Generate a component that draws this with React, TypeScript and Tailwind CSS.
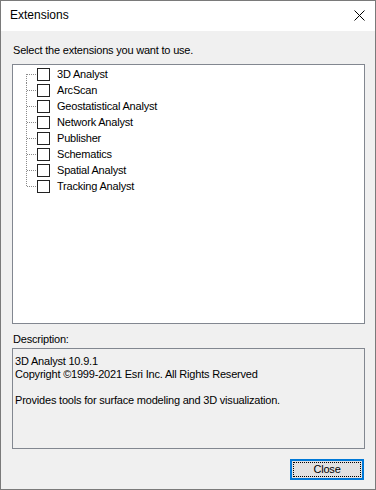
const extensions = [
  "3D Analyst",
  "ArcScan",
  "Geostatistical Analyst",
  "Network Analyst",
  "Publisher",
  "Schematics",
  "Spatial Analyst",
  "Tracking Analyst",
];

function TreeLines({ first, last }: { first: boolean; last: boolean }) {
  return (
    <svg width="24" height="16" viewBox="0 0 24 16" className="shrink-0">
      <line
        x1="13.5"
        y1={first ? 7 : 0}
        x2="13.5"
        y2={last ? 8 : 16}
        stroke="#8a8a8a"
        strokeWidth="1"
        strokeDasharray="1 1"
      />
      <line x1="14" y1="7.5" x2="24" y2="7.5" stroke="#8a8a8a" strokeWidth="1" strokeDasharray="1 1" />
    </svg>
  );
}

export default function App() {
  return (
    <div
      className="w-[376px] h-[490px] border border-[#7a7a7a] bg-[#f0f0f0] flex flex-col text-black text-[11px] leading-[13px] tracking-[-0.2px]"
      style={{ fontFamily: '"Liberation Sans", Arial, sans-serif' }}
    >
      {/* Title bar */}
      <div className="h-[30px] bg-white flex items-center justify-between shrink-0">
        <span className="pl-[9px] text-[12px] tracking-normal pb-[1px]">Extensions</span>
        <svg width="11" height="11" viewBox="0 0 11 11" className="mr-[10px] mb-[1px]">
          <path d="M0.5 0.5 L10.5 10.5 M10.5 0.5 L0.5 10.5" stroke="#000" strokeWidth="1" />
        </svg>
      </div>

      <div className="flex flex-col pl-[11px]">
        <p className="mt-[13px] pl-[1px]">Select the extensions you want to use.</p>

        {/* Extension list */}
        <div className="mt-[7px] w-[353px] h-[260px] border border-[#828790] bg-white pt-[2px]">
          {extensions.map((name, i) => (
            <div key={name} className="flex items-start h-[16px]">
              <TreeLines first={i === 0} last={i === extensions.length - 1} />
              <span className="mt-[1px] w-[13px] h-[13px] border border-[#222] bg-white shrink-0" />
              <span className="ml-[7px] mt-[1px]">{name}</span>
            </div>
          ))}
        </div>

        <p className="mt-[9px] pl-[1px]">Description:</p>

        <div className="mt-[2px] w-[353px] h-[101px] border border-[#828790] bg-[#f0f0f0] pt-[6px] pl-[2px]">
          <p>3D Analyst 10.9.1</p>
          <p>Copyright ©1999-2021 Esri Inc. All Rights Reserved</p>
          <p>&nbsp;</p>
          <p>Provides tools for surface modeling and 3D visualization.</p>
        </div>

        <div className="flex justify-end w-[353px] mt-[10px]">
          <button className="w-[74px] h-[21px] mr-[1px] border-2 border-[#0078d7] bg-[#e1e1e1] p-0 flex">
            <span className="flex-1 m-[1px] border border-dotted border-black flex items-center justify-center text-[11px]">
              Close
            </span>
          </button>
        </div>
      </div>
    </div>
  );
}
